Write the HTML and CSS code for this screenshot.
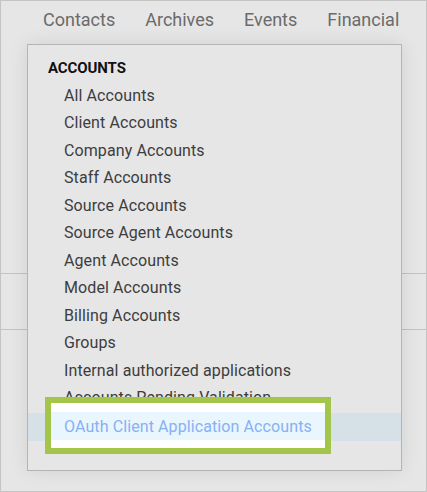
FILE: index.html
```html
<!DOCTYPE html>
<html>
<head>
<meta charset="utf-8">
<link rel="stylesheet" href="styles.css">
</head>
<body>
<div class="frame">
  <nav class="nav">
    <span class="nav-item">Contacts</span>
    <span class="nav-item">Archives</span>
    <span class="nav-item">Events</span>
    <span class="nav-item">Financial</span>
  </nav>
  <div class="content">
    <div class="row row-a"></div>
    <div class="row row-b"></div>
    <div class="row row-c"></div>
    <div class="dropdown">
      <div class="dd-header">ACCOUNTS</div>
      <ul class="dd-list">
        <li>All Accounts</li>
        <li>Client Accounts</li>
        <li>Company Accounts</li>
        <li>Staff Accounts</li>
        <li>Source Accounts</li>
        <li>Source Agent Accounts</li>
        <li>Agent Accounts</li>
        <li>Model Accounts</li>
        <li>Billing Accounts</li>
        <li>Groups</li>
        <li>Internal authorized applications</li>
        <li>Accounts Pending Validation</li>
        <li class="active"><span class="active-text">OAuth Client Application Accounts</span></li>
      </ul>
      <div class="callout"></div>
    </div>
  </div>
</div>
</body>
</html>
```

FILE: styles.css
```css
html, body {
  margin: 0;
  padding: 0;
}
body {
  font-family: Roboto, "Liberation Sans", sans-serif;
  background: #e6e6e6;
}
.frame {
  width: 427px;
  height: 492px;
  box-sizing: border-box;
  border: 1px solid #c4c4c4;
  background: #e6e6e6;
  overflow: hidden;
}
.nav {
  display: flex;
  height: 43px;
  box-sizing: border-box;
  align-items: center;
  padding-left: 42px;
  padding-bottom: 6px;
  gap: 30px;
  font-size: 18px;
  color: #6b6b6b;
}
.content {
  position: relative;
}
.row {
  border-bottom: 1px solid #c2c2c2;
}
.row-a { height: 229px; }
.row-b { height: 55px; }
.row-c { height: 120px; border-bottom: none; }
.dropdown {
  position: absolute;
  top: 0;
  left: 26px;
  width: 375px;
  height: 427px;
  box-sizing: border-box;
  border: 1px solid #b4b4b4;
  background: #e6e6e6;
  box-shadow: 0 0 18px rgba(0, 0, 0, 0.09);
  padding-top: 9px;
}
.dd-header {
  font-weight: 700;
  font-size: 15px;
  letter-spacing: -0.1px;
  color: #111;
  line-height: 25.5px;
  padding-top: 2px;
  padding-left: 20px;
}
.dd-list {
  list-style: none;
  margin: 0;
  padding: 0;
}
.dd-list li {
  font-size: 16px;
  letter-spacing: 0.1px;
  line-height: 27.5px;
  color: #3d3d3d;
  padding-left: 36px;
}
.dd-list li.active {
  position: relative;
  background: #d6e0e7;
  margin-top: 1px;
  line-height: 28px;
}
.active-text {
  position: relative;
  z-index: 2;
  color: #86b1f4;
}
.callout {
  position: absolute;
  z-index: 1;
  left: 17px;
  top: 352px;
  width: 286px;
  height: 57px;
  box-sizing: border-box;
  border: 6px solid #a2c54a;
  background: linear-gradient(to bottom, #ffffff 9px, #eaf6fd 9px, #eaf6fd 37px, #ffffff 37px);
}
```
